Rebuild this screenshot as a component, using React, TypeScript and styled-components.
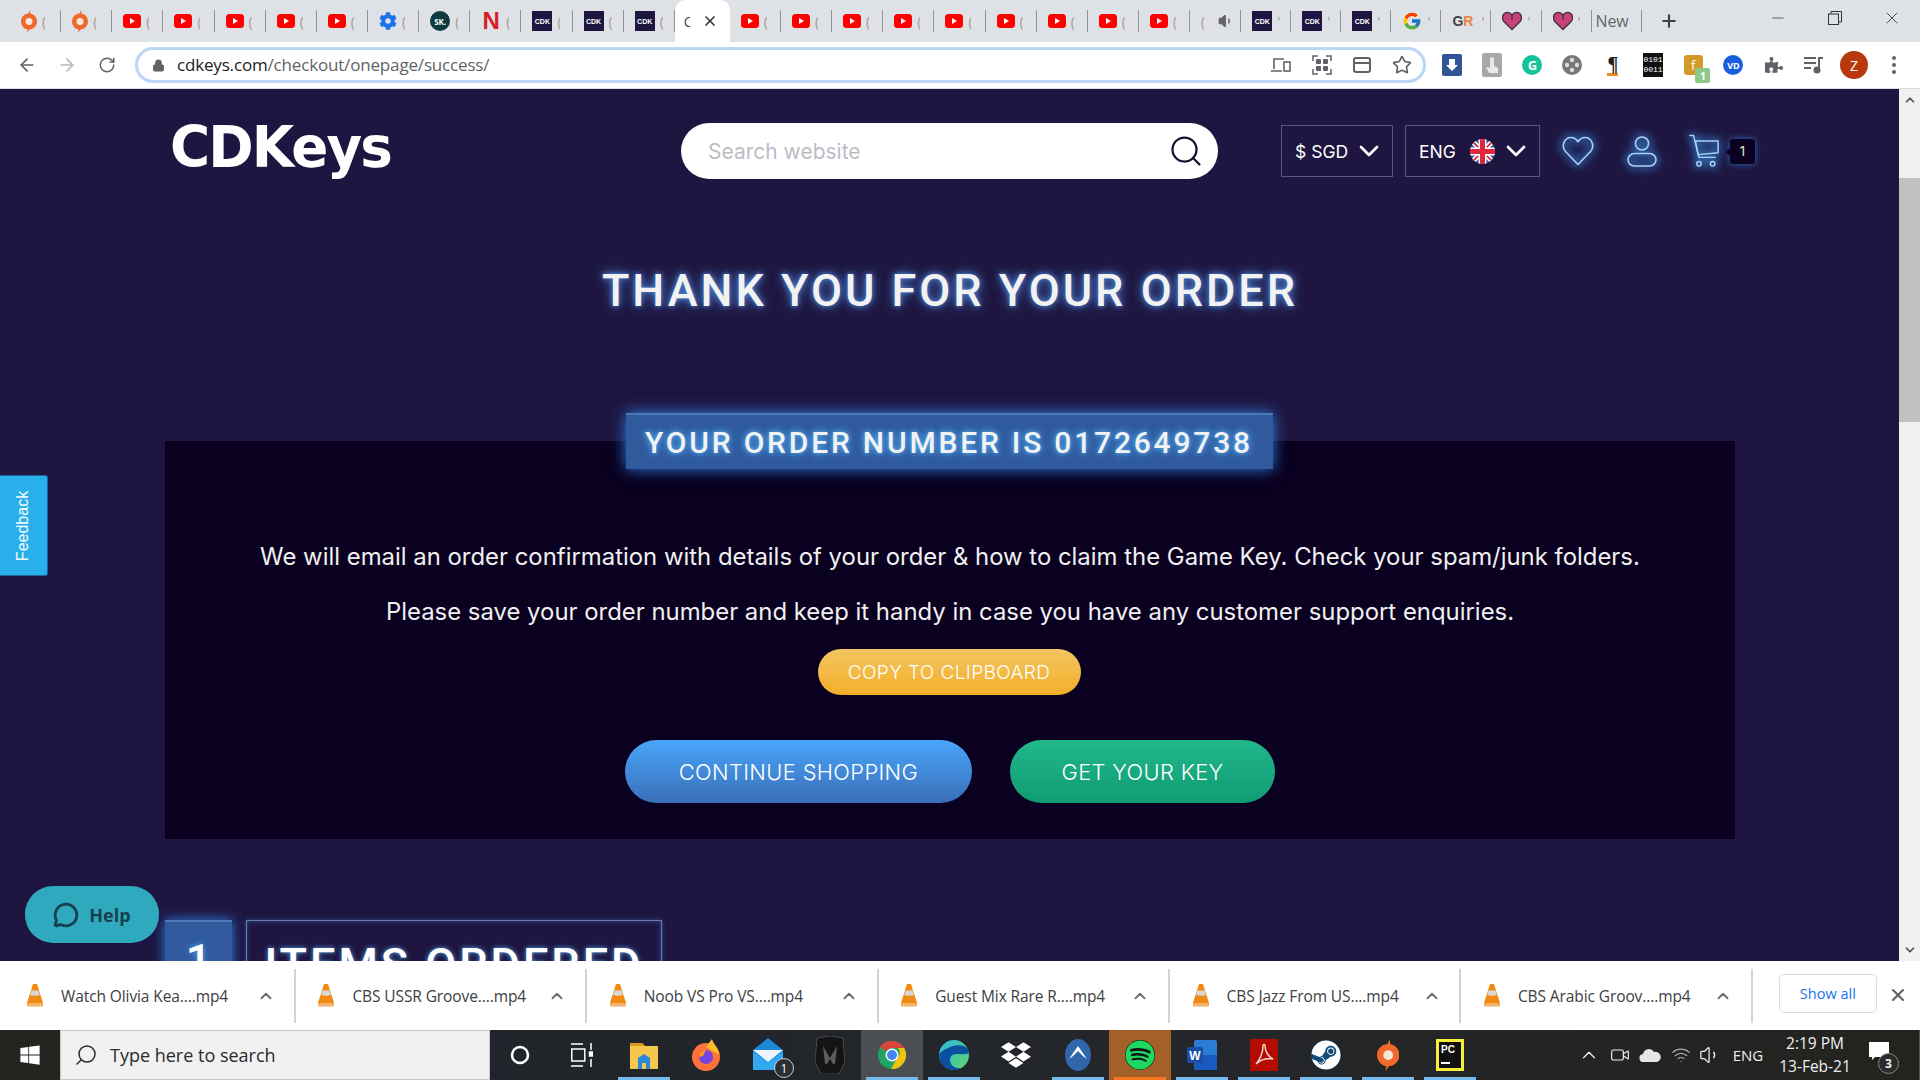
import React from 'react';
import styled, { createGlobalStyle } from 'styled-components';
import { FcGoogle } from 'react-icons/fc';
import { FaDropbox, FaSteam, FaSpotify, FaWindows, FaPuzzlePiece, FaCog } from 'react-icons/fa';
import {
    ArrowLeft, ArrowRight, RotateCw, Lock, Star, ChevronUp, ChevronDown, X, Minus, Plus, Search,
    Video, Wifi, Volume1, MessageCircle,
} from 'lucide-react';

const GlobalStyle = createGlobalStyle`
    html, body {
        margin: 0;
        height: 100%;
        overflow: hidden;
        font-family: "Open Sans", sans-serif;
    }
    * { box-sizing: border-box; }
`;

const Screen = styled.div`
    width: 1920px;
    height: 1080px;
    display: flex;
    flex-direction: column;
    position: relative;
    overflow: hidden;
`;

/* browser chrome */
const TabStrip = styled.div`
    height: 42px;
    background: #dee1e6;
    display: flex;
    padding-left: 10px;
    flex-shrink: 0;
`;

const Tab = styled.div<{ $compact?: boolean }>`
    width: ${(p) => (p.$compact ? '50.05px' : '51.15px')};
    height: 42px;
    display: flex;
    align-items: center;
    padding-left: 11px;
    gap: 5px;
    position: relative;
    font-size: 14px;
    color: #555;
    overflow: hidden;
    flex-shrink: 0;
    &::after {
        content: '';
        position: absolute;
        right: 0;
        top: 10px;
        height: 22px;
        width: 1px;
        background: #8f9398;
    }
`;

const NewLabel = styled.span`
    margin-left: -7px;
    font-size: 16px;
    letter-spacing: -0.2px;
    color: #666;
`;

const ActiveTab = styled.div`
    width: 55px;
    height: 42px;
    background: #fff;
    border-radius: 10px 10px 0 0;
    display: flex;
    align-items: center;
    justify-content: space-between;
    padding: 0 12px 0 9px;
    font-size: 14px;
    color: #444;
    flex-shrink: 0;
`;

const CutTitle = styled.span`
    width: 6px;
    overflow: hidden;
`;

const Sliver = styled.span`
    font-size: 14px;
    width: 3px;
    overflow: hidden;
    color: #a89888;
`;

const NewTabButton = styled.div`
    width: 40px;
    margin-left: 17px;
    display: flex;
    align-items: center;
    color: #3c4043;
`;

const WindowControls = styled.div`
    margin-left: auto;
    display: flex;
    align-items: flex-start;
    color: #333;
`;

const WindowButton = styled.div`
    width: 57px;
    height: 36px;
    display: flex;
    align-items: center;
    justify-content: center;
`;

const Toolbar = styled.div`
    height: 46px;
    background: #fff;
    display: flex;
    align-items: center;
    padding-left: 7px;
    flex-shrink: 0;
`;

const NavButton = styled.div<{ $muted?: boolean }>`
    width: 40px;
    height: 36px;
    display: flex;
    align-items: center;
    justify-content: center;
    color: ${(p) => (p.$muted ? '#b4b6b9' : '#5f6368')};
    flex-shrink: 0;
`;

const Omnibox = styled.div`
    width: 1291px;
    margin-left: 8px;
    margin-right: -1px;
    height: 36px;
    border: 3px solid #bcd6f7;
    border-radius: 18px;
    display: flex;
    align-items: center;
    padding-left: 14px;
    gap: 12px;
    color: #5f6368;
    flex-shrink: 0;
`;

const Url = styled.span`
    font-size: 17px;
    letter-spacing: -0.17px;
    color: #5f6368;
    margin-top: -2px;
    b {
        font-weight: 400;
        color: #202124;
    }
`;

const OmniActions = styled.div`
    margin-left: auto;
    display: flex;
    margin-right: 1px;
`;

const Extensions = styled.div`
    display: flex;
    margin-left: 7px;
`;

const Divider = styled.div`
    height: 1px;
    background: #dadce0;
    flex-shrink: 0;
`;

/* page */
const Viewport = styled.div`
    height: 872px;
    display: flex;
    flex-shrink: 0;
    overflow: hidden;
`;

const Page = styled.main`
    flex: 1;
    background: #1e1640;
    overflow: hidden;
    color: #fff;
    font-family: Inter, sans-serif;
`;

const Container = styled.div`
    width: 1570px;
    margin-left: 165px;
`;

const Header = styled.header`
    display: flex;
    align-items: center;
    height: 56px;
    margin-top: 34px;
`;

const LogoWrap = styled.div`
    width: 516px;
    flex-shrink: 0;
    padding-left: 5px;
`;

const Logo = styled.span`
    display: inline-block;
    font-family: "DejaVu Sans", sans-serif;
    font-weight: 700;
    font-size: 57px;
    line-height: 56px;
    letter-spacing: -2px;
    color: #fff;
    transform-origin: left center;
    transform: translateY(-4px) scaleX(0.96);
`;

const SearchBox = styled.div`
    width: 537px;
    height: 56px;
    background: #fff;
    border-radius: 28px;
    display: flex;
    align-items: center;
    justify-content: space-between;
    padding: 0 14px 0 27px;
    color: #bcbcc4;
    font-size: 21px;
    flex-shrink: 0;
`;

const Select = styled.div<{ $width: number }>`
    width: ${(p) => p.$width}px;
    height: 52px;
    border: 1px solid #5b5580;
    display: flex;
    align-items: center;
    justify-content: space-between;
    padding: 0 7px 0 13px;
    font-size: 17.5px;
    flex-shrink: 0;
`;

const FlagSlot = styled.span`
    display: flex;
    margin-left: 10px;
`;

const Selects = styled.div`
    display: flex;
    gap: 12px;
    margin-left: 63px;
`;

const HeaderIcons = styled.div`
    display: flex;
    align-items: center;
    margin-left: 21px;
`;

const GlowIcon = styled.div<{ $width: number }>`
    width: ${(p) => p.$width}px;
    display: flex;
    justify-content: center;
    filter: drop-shadow(0 0 4px #3d8fe6) drop-shadow(0 0 4px #3d8fe6);
`;

const CartBadge = styled.div`
    width: 25px;
    height: 25px;
    background: #0a0020;
    border-radius: 3px;
    margin-left: 11px;
    font-size: 13px;
    display: flex;
    align-items: center;
    justify-content: center;
    color: #f0e8d0;
    box-shadow: 0 0 6px #2f6fc4;
    position: relative;
    &::before {
        content: '';
        position: absolute;
        left: -4px;
        top: 9px;
        border-style: solid;
        border-width: 4px 4px 4px 0;
        border-color: transparent #0a0020 transparent transparent;
    }
`;

const Title = styled.h1`
    margin: 85px 0 0;
    text-align: center;
    font-family: Roboto, sans-serif;
    font-weight: 500;
    font-size: 45px;
    line-height: 54px;
    letter-spacing: 3px;
    color: #f2f2f2;
    text-shadow: 0 0 12px #4f86d8, 0 0 5px #4f86d8;
`;

const Card = styled.section`
    margin-top: 123px;
    height: 398px;
    background: #0a0020;
    display: flex;
    flex-direction: column;
    align-items: center;
`;

const OrderBanner = styled.div`
    margin-top: -28px;
    margin-right: 2px;
    width: 647px;
    height: 56px;
    background: #305a9d;
    border-top: 2px solid #4f78b8;
    box-shadow: 0 0 14px #2f7fe0;
    display: flex;
    align-items: center;
    justify-content: center;
    font-family: Roboto, sans-serif;
    font-weight: 500;
    font-size: 30px;
    letter-spacing: 2.8px;
    white-space: nowrap;
    color: #f2f2f2;
    text-shadow: 0 0 10px #52a8f0, 0 0 4px #52a8f0;
`;

const Message = styled.p<{ $top: number }>`
    margin: ${(p) => p.$top}px 0 0;
    font-size: 23.9px;
    line-height: 30px;
    white-space: nowrap;
    color: #f0f0f0;
    font-weight: 400;
`;

const Pill = styled.div<{ $from: string; $to: string; $width: number; $height: number; $size: number }>`
    width: ${(p) => p.$width}px;
    height: ${(p) => p.$height}px;
    border-radius: ${(p) => p.$height / 2}px;
    background: linear-gradient(${(p) => p.$from}, ${(p) => p.$to});
    display: flex;
    align-items: center;
    justify-content: center;
    font-size: ${(p) => p.$size}px;
    font-weight: 300;
    letter-spacing: 0.4px;
    color: #fff;
    white-space: nowrap;
`;

const CopyRow = styled.div`
    margin-top: 22px;
    margin-right: 2px;
`;

const ActionRow = styled.div`
    margin-top: 45px;
    display: flex;
    gap: 38px;
`;

const ItemsRow = styled.div`
    margin-top: 81px;
    display: flex;
    gap: 14px;
`;

const StepNumber = styled.div`
    width: 67px;
    height: 72px;
    background: #305a9d;
    border-top: 2px solid #4f78b8;
    box-shadow: 0 0 12px #2f7fe0;
    display: flex;
    justify-content: center;
    padding-top: 16px;
    font-family: Roboto, sans-serif;
    font-weight: 500;
    font-size: 45px;
    line-height: 46px;
    text-shadow: 0 0 6px #52a8f0;
`;

const StepTitle = styled.div`
    width: 416px;
    height: 72px;
    border: 1px solid #6f78a8;
    box-shadow: inset 0 0 5px #24508f, 0 0 4px #24508f;
    display: flex;
    justify-content: center;
    padding-top: 17px;
    font-family: Roboto, sans-serif;
    font-weight: 500;
    font-size: 45px;
    line-height: 54px;
    letter-spacing: 3px;
    text-shadow: 0 0 5px #52a8f0;
`;

const Scrollbar = styled.div`
    width: 21px;
    background: #f1f1f1;
    display: flex;
    flex-direction: column;
    align-items: center;
    color: #505050;
`;

const ScrollThumb = styled.div`
    width: 100%;
    height: 244px;
    background: #c1c1c1;
    margin-top: 67px;
`;

const ScrollArrow = styled.div<{ $end?: boolean }>`
    height: 22px;
    display: flex;
    align-items: center;
    justify-content: center;
    margin-top: ${(p) => (p.$end ? 'auto' : '0')};
`;

const Feedback = styled.div`
    position: absolute;
    left: 0;
    top: 475px;
    width: 48px;
    height: 101px;
    background: #29b0ea;
    border: 1px solid #20639a;
    border-left: 0;
    border-radius: 0 3px 3px 0;
    display: flex;
    align-items: center;
    justify-content: center;
    color: #f4fbff;
    font-family: "Liberation Sans", sans-serif;
    font-size: 16px;
    span {
        transform: rotate(-90deg);
    }
`;

const HelpButton = styled.div`
    position: absolute;
    left: 25px;
    top: 886px;
    width: 134px;
    height: 57px;
    border-radius: 28px;
    background: #2fa9bd;
    color: #15404d;
    display: flex;
    align-items: center;
    justify-content: center;
    gap: 10px;
    font-family: "Open Sans", sans-serif;
    font-weight: 700;
    font-size: 18px;
`;

/* downloads */
const DownloadBar = styled.div`
    height: 69px;
    background: #fff;
    display: flex;
    align-items: center;
    padding-left: 4.5px;
    flex-shrink: 0;
    position: relative;
`;

const DownloadItem = styled.div`
    width: 291.4px;
    height: 54px;
    border-right: 2px solid #d3d3d3;
    display: flex;
    align-items: center;
    padding-left: 21.5px;
    flex-shrink: 0;
`;

const FileName = styled.span`
    margin-left: 17px;
    width: 190px;
    font-size: 15.5px;
    letter-spacing: -0.1px;
    color: #3c4043;
    white-space: nowrap;
`;

const ChevronSlot = styled.div`
    color: #6b6f73;
    display: flex;
    margin-left: 6px;
`;

const ShowAll = styled.div`
    width: 98px;
    height: 39px;
    border: 1px solid #dadce0;
    border-radius: 5px;
    margin-left: 26px;
    margin-top: -4px;
    display: flex;
    align-items: center;
    justify-content: center;
    color: #1a73e8;
    font-size: 14.5px;
`;

const CloseDownloads = styled.div`
    margin-left: 11px;
    margin-top: -1px;
    color: #5f6368;
    display: flex;
`;

/* taskbar */
const Taskbar = styled.div`
    height: 50px;
    background: linear-gradient(90deg, #24251f, #20252b 25%, #24262a 60%, #23231f);
    display: flex;
    align-items: center;
    color: #fff;
    flex-shrink: 0;
`;

const StartButton = styled.div`
    width: 60px;
    display: flex;
    justify-content: center;
`;

const SearchField = styled.div`
    width: 430px;
    height: 50px;
    background: #f1f1f1;
    border: 1px solid #c8c8c8;
    display: flex;
    align-items: center;
    padding-left: 13px;
    gap: 12px;
    color: #2b2b2b;
    font-size: 18px;
`;

const TaskIcons = styled.div`
    display: flex;
`;

const TaskIcon = styled.div<{ $bg?: string; $line?: string; $wide?: number }>`
    width: ${(p) => p.$wide ?? 62}px;
    height: 50px;
    background: ${(p) => p.$bg ?? 'transparent'};
    display: flex;
    align-items: center;
    justify-content: center;
    position: relative;
    &::after {
        content: '';
        position: absolute;
        bottom: 0;
        left: 5px;
        right: 5px;
        height: 3px;
        background: ${(p) => p.$line ?? 'transparent'};
    }
`;

const MailCount = styled.span`
    position: absolute;
    right: 5px;
    bottom: 2px;
    width: 20px;
    height: 20px;
    border-radius: 50%;
    background: #2c3034;
    border: 1px solid #ccc;
    font-size: 12px;
    display: flex;
    align-items: center;
    justify-content: center;
`;

const Tray = styled.div`
    margin-left: auto;
    display: flex;
    align-items: center;
    font-size: 15px;
    color: #f0f0f0;
`;

const TraySlot = styled.div<{ $width: number }>`
    width: ${(p) => p.$width}px;
    display: flex;
    justify-content: center;
`;

const Clock = styled.div`
    width: 82px;
    margin-left: 2px;
    text-align: center;
    font-size: 15.5px;
    line-height: 23px;
    white-space: nowrap;
`;

const NoteSlot = styled.div`
    width: 60px;
    height: 50px;
    margin-left: 4px;
    position: relative;
    display: flex;
    align-items: center;
    padding-left: 9px;
    border-right: 1px solid #555;
    padding-bottom: 8px;
`;

const NoteCount = styled.span`
    position: absolute;
    left: 18px;
    top: 23px;
    width: 21px;
    height: 21px;
    border-radius: 50%;
    background: #2b2b2b;
    border: 1px solid #888;
    font-size: 12px;
    font-weight: 700;
    display: flex;
    align-items: center;
    justify-content: center;
`;

/* favicons */
const CdkFav = styled.div`
    width: 20px;
    height: 20px;
    background: #1e1640;
    color: #fff;
    font-family: "Liberation Sans", sans-serif;
    font-size: 7px;
    font-weight: 700;
    display: flex;
    align-items: center;
    justify-content: center;
    flex-shrink: 0;
`;

const SkFav = styled.div`
    width: 20px;
    height: 20px;
    border-radius: 50%;
    background: #0f3a40;
    color: #fff;
    font-size: 8px;
    font-weight: 700;
    display: flex;
    align-items: center;
    justify-content: center;
    flex-shrink: 0;
`;

const NetflixFav = styled.div`
    width: 20px;
    color: #d81f26;
    font-family: "Liberation Sans Narrow", "Liberation Sans", sans-serif;
    font-size: 24px;
    font-weight: 700;
    line-height: 24px;
    text-align: center;
    flex-shrink: 0;
`;

const GrFav = styled.div`
    font-family: "Liberation Sans", sans-serif;
    font-size: 14px;
    font-weight: 700;
    width: 24px;
    color: #444;
    flex-shrink: 0;
    b { color: #e8854a; }
`;

const ExtButton = styled.div`
    width: 40.2px;
    height: 36px;
    display: flex;
    align-items: center;
    justify-content: center;
    color: #5f6368;
    position: relative;
    flex-shrink: 0;
`;

const BinaryExt = styled.div`
    width: 20px;
    height: 24px;
    background: #111;
    color: #fff;
    font-family: "Liberation Mono", monospace;
    font-size: 8px;
    line-height: 10px;
    text-align: center;
    padding-top: 2px;
`;

const Avatar = styled.div`
    width: 28px;
    height: 28px;
    border-radius: 50%;
    background: #b8390e;
    color: #fff;
    font-size: 14px;
    display: flex;
    align-items: center;
    justify-content: center;
`;

const Pilcrow = styled.div`
    color: #222;
    font-family: "Liberation Serif", serif;
    font-size: 20px;
    font-weight: 700;
    line-height: 18px;
    border-bottom: 3px solid #f08a24;
`;

const YellowExt = styled.div`
    width: 19px;
    height: 20px;
    background: #d39a2a;
    color: #fff;
    border-radius: 3px;
    font-size: 13px;
    text-align: center;
    line-height: 20px;
`;

const ExtCount = styled.span`
    position: absolute;
    right: 3px;
    bottom: 0;
    width: 15px;
    height: 15px;
    background: #8bc98b;
    color: #fff;
    font-size: 11px;
    font-weight: 700;
    border-radius: 2px;
    text-align: center;
    line-height: 15px;
`;

const VdExt = styled.div`
    width: 20px;
    height: 20px;
    border-radius: 50%;
    background: #1a5de0;
    color: #fff;
    font-size: 9px;
    font-weight: 700;
    display: flex;
    align-items: center;
    justify-content: center;
`;

const GrammarlyExt = styled.div`
    width: 20px;
    height: 20px;
    border-radius: 50%;
    background: #15c39a;
    color: #fff;
    font-size: 13px;
    font-weight: 700;
    display: flex;
    align-items: center;
    justify-content: center;
`;

const YouTube = () => (
    <svg width="18" height="14" viewBox="0 0 18 14" style={{ flexShrink: 0 }}>
        <rect width="18" height="14" rx="3.5" fill="#f00" />
        <path d="M7 4l5 3-5 3z" fill="#fff" />
    </svg>
);

const Origin = ({ size = 20 }: { size?: number }) => (
    <svg width={size * 0.8} height={size * 1.15} viewBox="0 0 16 23" style={{ flexShrink: 0 }}>
        <path d="M9 0l-1.5 3.6C3.2 4 0 7.2 0 11.500c0 4 2.800 7.300 6.600 8L6 23l2.500-3.500c4.300-.3 7.500-3.700 7.500-8 0-3.900-2.800-7.200-6.500-7.900z" fill="#f0692c" />
        <circle cx="8" cy="11.500" r="3.500" fill="#f6e6da" />
    </svg>
);

const LoveHeart = () => (
    <svg width="20" height="20" viewBox="0 0 22 21" style={{ flexShrink: 0 }}>
        <path d="M11 20L2 11C-1 7 1 1 6 1c2.500 0 4 1.500 5 3 1-1.500 2.500-3 5-3 5 0 7 6 4 10z" fill="#c8407c" stroke="#43303c" strokeWidth="1.500" />
        <path d="M11 4v5" stroke="#43303c" strokeWidth="1.500" />
    </svg>
);

const Gear = () => <FaCog size={18} color="#1a73e8" style={{ flexShrink: 0 }} />;

const Vlc = () => (
    <svg width="18" height="25" viewBox="0 0 18 25">
        <path d="M7 1h4l6 19c.4 2-1 3-2 3H3c-1 0-2.400-1-2-3z" fill="#f08a12" />
        <path d="M5.500 7.500h7l1.300 4.500c-2.500 1-7.100 1-9.600 0z" fill="#d8d8d8" />
        <path d="M1.500 20h15l.5 3.500H1z" fill="#f6b26b" />
    </svg>
);

const Chrome = () => (
    <svg width="28" height="28" viewBox="0 0 28 28">
        <circle cx="14" cy="14" r="14" fill="#1fa463" />
        <path d="M14 0a14 14 0 0 1 12.100 7H14a7 7 0 0 0-6.100 3.500L2.100 5.800A14 14 0 0 1 14 0z" fill="#db4437" />
        <path d="M26.100 7A14 14 0 0 1 13 28l5.900-10.500A7 7 0 0 0 20 7z" fill="#f4c20d" />
        <circle cx="14" cy="14" r="6.500" fill="#fff" />
        <circle cx="14" cy="14" r="5" fill="#4285f4" />
    </svg>
);

const Edge = () => (
    <svg width="30" height="30" viewBox="0 0 30 30">
        <defs>
            <linearGradient id="edgeTop" x1="0" y1="0" x2="1" y2="1">
                <stop offset="0" stopColor="#2fb8e0" />
                <stop offset="1" stopColor="#5fd66a" />
            </linearGradient>
        </defs>
        <circle cx="15" cy="15" r="15" fill="url(#edgeTop)" />
        <path d="M0 15c0 9 7 15 15 15 3 0 5-.5 7-2-6 1-11-3-11-8 0-4 3-6 7-6 4 0 12 1 12-2 0-1-1-3-2-4-6-4-13-3-19 0C4 10 1 12 0 15z" fill="#0b4fa0" />
    </svg>
);

const Firefox = () => (
    <svg width="28" height="32" viewBox="0 0 28 32">
        <circle cx="14" cy="18" r="14" fill="#ff7139" />
        <path d="M20 0c1 5 7 8 7 16L14 8z" fill="#ffbd2e" />
        <circle cx="14" cy="18" r="7" fill="#7542e5" />
        <path d="M7 18a7 7 0 0 1 7-7l-3 6z" fill="#ff980e" />
    </svg>
);

const Mail = () => (
    <svg width="30" height="34" viewBox="0 0 30 34">
        <path d="M0 12L15 0l15 12v20H0z" fill="#1e88d8" />
        <path d="M0 12h30L15 24z" fill="#eaf5fd" />
        <path d="M0 14l15 10 15-10v18H0z" fill="#32a8ee" />
    </svg>
);

const Predator = () => (
    <svg width="30" height="38" viewBox="0 0 30 38">
        <path d="M2 2l13-2 13 2 2 24-6 12H6L0 26z" fill="#141414" stroke="#4a4a4a" />
        <path d="M8 10l7 12 7-12-2 18h-2l-3-5-3 5h-2z" fill="#5c5c5c" />
    </svg>
);

const Nord = () => (
    <svg width="26" height="32" viewBox="0 0 26 32">
        <ellipse cx="13" cy="16" rx="13" ry="16" fill="#2f66ac" />
        <path d="M4 20l9-13 9 13-4-3-5-5-5 5z" fill="#fff" />
    </svg>
);

const Word = () => (
    <svg width="30" height="30" viewBox="0 0 30 30">
        <rect x="7" y="0" width="23" height="30" rx="2" fill="#2b7cd3" />
        <rect x="7" y="15" width="23" height="15" fill="#185abd" />
        <rect x="0" y="7" width="16" height="16" rx="2" fill="#1a4fa8" />
        <text x="8" y="19.500" fontSize="12" fontWeight="700" fill="#fff" textAnchor="middle" fontFamily="Liberation Sans">W</text>
    </svg>
);

const Acrobat = () => (
    <svg width="28" height="32" viewBox="0 0 28 32">
        <rect width="28" height="32" fill="#b30b00" />
        <path d="M6 25c4-4 7-12 7-18 0-2 2-2 2 0 0 6 4 11 8 13-6-1-12 0-17 5z" fill="none" stroke="#f4d6d0" strokeWidth="1.500" />
    </svg>
);

const PyCharm = () => (
    <svg width="28" height="32" viewBox="0 0 28 32">
        <rect width="28" height="32" fill="#f5ee3a" />
        <rect x="3" y="3" width="22" height="26" fill="#111" />
        <text x="5" y="14" fontSize="10" fontWeight="700" fill="#fff" fontFamily="Liberation Sans">PC</text>
        <rect x="5" y="23" width="9" height="2" fill="#fff" />
    </svg>
);

const Flag = () => (
    <svg width="25" height="25" viewBox="0 0 25 25" style={{ borderRadius: '50%' }}>
        <rect width="25" height="25" fill="#2a5ca8" />
        <path d="M0 0l25 25M25 0L0 25" stroke="#fff" strokeWidth="5" />
        <path d="M0 0l25 25M25 0L0 25" stroke="#e0263c" strokeWidth="1.800" />
        <path d="M12.500 0v25M0 12.500h25" stroke="#fff" strokeWidth="8" />
        <path d="M12.500 0v25M0 12.500h25" stroke="#e0263c" strokeWidth="5" />
    </svg>
);

const GlowHeart = () => (
    <svg width="32" height="30" viewBox="0 0 32 30" fill="none" stroke="#a8d3f7" strokeWidth="1.6" strokeLinejoin="round">
        <path d="M16 28.500L3.500 15.500C-1 10.500 2 1.500 9 1.500c3.500 0 5.600 2 7 4.200 1.400-2.200 3.500-4.200 7-4.200 7 0 10 9 5.500 14z" />
    </svg>
);

const GlowPerson = () => (
    <svg width="30" height="31" viewBox="0 0 30 31" fill="none" stroke="#a8d3f7" strokeWidth="1.6">
        <circle cx="15" cy="7.500" r="6.500" />
        <rect x="1" y="17.500" width="28" height="12.500" rx="6.250" />
    </svg>
);

const GlowCart = () => (
    <svg width="33" height="36" viewBox="0 0 33 36" fill="none" stroke="#a8d3f7" strokeWidth="1.6" strokeLinejoin="round" strokeLinecap="round">
        <path d="M1 1h4l6 24h18" />
        <path d="M7 7h25v13l-22 2z" />
        <circle cx="11" cy="32" r="2.500" />
        <circle cx="26" cy="32" r="2.500" />
    </svg>
);

const ChevronWhite = () => <ChevronDown size={32} strokeWidth={2} color="#fff" />;

const tabs: React.ReactNode[] = [
    <Origin />, <Origin />, <YouTube />, <YouTube />, <YouTube />, <YouTube />, <YouTube />, <Gear />,
    <SkFav>SK.</SkFav>, <NetflixFav>N</NetflixFav>, <CdkFav>CDK</CdkFav>, <CdkFav>CDK</CdkFav>, <CdkFav>CDK</CdkFav>,
];

const tabsAfter: React.ReactNode[] = [
    <YouTube />, <YouTube />, <YouTube />, <YouTube />, <YouTube />, <YouTube />, <YouTube />, <YouTube />, <YouTube />,
];

const tabsEnd: React.ReactNode[] = [
    <CdkFav>CDK</CdkFav>, <CdkFav>CDK</CdkFav>, <CdkFav>CDK</CdkFav>, <FcGoogle size={20} style={{ flexShrink: 0 }} />,
    <GrFav>G<b>R</b></GrFav>, <LoveHeart />, <LoveHeart />,
];

const downloads = [
    'Watch Olivia Kea....mp4',
    'CBS USSR Groove....mp4',
    'Noob VS Pro VS....mp4',
    'Guest Mix Rare R....mp4',
    'CBS Jazz From US....mp4',
    'CBS Arabic Groov....mp4',
];

const App = () => (
    <Screen>
        <GlobalStyle />
        <TabStrip>
            {tabs.map((icon, i) => (
                <Tab key={i}>{icon}<Sliver>(</Sliver></Tab>
            ))}
            <ActiveTab>
                <CutTitle>C</CutTitle>
                <X size={16} strokeWidth={2.5} color="#333" />
            </ActiveTab>
            {tabsAfter.map((icon, i) => (
                <Tab key={i}>{icon}<Sliver>(</Sliver></Tab>
            ))}
            <Tab>
                <Sliver>(</Sliver>
                <Volume1 size={16} color="#666" fill="#666" style={{ flexShrink: 0, marginLeft: 9 }} />
            </Tab>
            {tabsEnd.map((icon, i) => (
                <Tab key={i} $compact>{icon}<Sliver>'</Sliver></Tab>
            ))}
            <Tab $compact><NewLabel>New</NewLabel></Tab>
            <NewTabButton><Plus size={20} strokeWidth={2.5} /></NewTabButton>
            <WindowControls>
                <WindowButton><Minus size={18} strokeWidth={1} /></WindowButton>
                <WindowButton>
                    <svg width="14" height="14" viewBox="0 0 14 14" fill="none" stroke="#333">
                        <rect x="0.500" y="3" width="10" height="10.500" />
                        <path d="M3 3V.500h10.500V11H10.500" />
                    </svg>
                </WindowButton>
                <WindowButton><X size={20} strokeWidth={1} /></WindowButton>
            </WindowControls>
        </TabStrip>
        <Toolbar>
            <NavButton><ArrowLeft size={20} /></NavButton>
            <NavButton $muted><ArrowRight size={20} /></NavButton>
            <NavButton><RotateCw size={18} /></NavButton>
            <Omnibox>
                <Lock size={13} fill="#5f6368" />
                <Url><b>cdkeys.com</b>/checkout/onepage/success/</Url>
                <OmniActions>
                    <ExtButton>
                        <svg width="20" height="16" viewBox="0 0 20 16" fill="none" stroke="#5f6368" strokeWidth="1.600">
                            <path d="M13 2H3v10M0 14h11" />
                            <rect x="13" y="5" width="6" height="9" />
                        </svg>
                    </ExtButton>
                    <ExtButton>
                        <svg width="20" height="20" viewBox="0 0 20 20" fill="#5f6368">
                            <rect x="4" y="4" width="5" height="5" rx="1" />
                            <rect x="11" y="4" width="5" height="5" rx="1" />
                            <rect x="4" y="11" width="5" height="5" rx="1" />
                            <rect x="11" y="11" width="5" height="5" rx="1" />
                            <path d="M1 6V1h5M14 1h5v5M19 14v5h-5M6 19H1v-5" fill="none" stroke="#5f6368" strokeWidth="1.500" />
                        </svg>
                    </ExtButton>
                    <ExtButton>
                        <svg width="18" height="16" viewBox="0 0 18 16" fill="none" stroke="#5f6368" strokeWidth="2">
                            <rect x="1" y="1" width="16" height="14" rx="2" />
                            <path d="M1 6h16" />
                        </svg>
                    </ExtButton>
                    <ExtButton><Star size={20} color="#5f6368" /></ExtButton>
                </OmniActions>
            </Omnibox>
            <Extensions>
                <ExtButton>
                    <svg width="20" height="22" viewBox="0 0 20 22">
                        <rect width="20" height="22" rx="2" fill="#2f5597" />
                        <path d="M7 5h6v6h3l-6 6-6-6h3z" fill="#fff" />
                    </svg>
                </ExtButton>
                <ExtButton>
                    <svg width="20" height="24" viewBox="0 0 20 24">
                        <rect width="20" height="24" rx="2" fill="#a8a8a8" />
                        <path d="M8 6a2 2 0 0 1 4 0v7l4 2v5H7l-3-6 4 1z" fill="#e8e8e8" />
                    </svg>
                </ExtButton>
                <ExtButton><GrammarlyExt>G</GrammarlyExt></ExtButton>
                <ExtButton>
                    <svg width="22" height="24" viewBox="0 0 22 24">
                        <circle cx="10" cy="12" r="10" fill="#777" />
                        <circle cx="10" cy="7" r="2.200" fill="#ddd" />
                        <circle cx="5" cy="12" r="2.200" fill="#ddd" />
                        <circle cx="15" cy="12" r="2.200" fill="#ddd" />
                        <circle cx="10" cy="17" r="2.200" fill="#ddd" />
                    </svg>
                </ExtButton>
                <ExtButton><Pilcrow>¶</Pilcrow></ExtButton>
                <ExtButton><BinaryExt>0101<br />0011</BinaryExt></ExtButton>
                <ExtButton><YellowExt>f</YellowExt><ExtCount>1</ExtCount></ExtButton>
                <ExtButton><VdExt>VD</VdExt></ExtButton>
                <ExtButton><FaPuzzlePiece size={18} color="#5f6368" /></ExtButton>
                <ExtButton>
                    <svg width="20" height="18" viewBox="0 0 20 18" fill="none" stroke="#5f6368" strokeWidth="2">
                        <path d="M0 2h12M0 7h12M0 12h7M15 14V2h4" />
                        <circle cx="13" cy="14" r="2.500" fill="#5f6368" />
                    </svg>
                </ExtButton>
                <ExtButton><Avatar>Z</Avatar></ExtButton>
                <ExtButton>
                    <svg width="4" height="18" viewBox="0 0 4 18" fill="#5f6368">
                        <circle cx="2" cy="2" r="2" />
                        <circle cx="2" cy="9" r="2" />
                        <circle cx="2" cy="16" r="2" />
                    </svg>
                </ExtButton>
            </Extensions>
        </Toolbar>
        <Divider />
        <Viewport>
            <Page>
                <Container>
                    <Header>
                        <LogoWrap><Logo>CDKeys</Logo></LogoWrap>
                        <SearchBox>
                            Search website
                            <Search size={36} strokeWidth={1.5} color="#141030" />
                        </SearchBox>
                        <Selects>
                            <Select $width={112}>$ SGD <ChevronWhite /></Select>
                            <Select $width={135}>ENG <FlagSlot><Flag /></FlagSlot> <ChevronWhite /></Select>
                        </Selects>
                        <HeaderIcons>
                            <GlowIcon $width={34}><GlowHeart /></GlowIcon>
                            <GlowIcon $width={94}><GlowPerson /></GlowIcon>
                            <GlowIcon $width={30}><GlowCart /></GlowIcon>
                            <CartBadge>1</CartBadge>
                        </HeaderIcons>
                    </Header>
                    <Title>THANK YOU FOR YOUR ORDER</Title>
                    <Card>
                        <OrderBanner>YOUR ORDER NUMBER IS 0172649738</OrderBanner>
                        <Message $top={73}>We will email an order confirmation with details of your order &amp; how to claim the Game Key. Check your spam/junk folders.</Message>
                        <Message $top={25}>Please save your order number and keep it handy in case you have any customer support enquiries.</Message>
                        <CopyRow>
                            <Pill $from="#f2c562" $to="#f3ae28" $width={263} $height={46} $size={19}>COPY TO CLIPBOARD</Pill>
                        </CopyRow>
                        <ActionRow>
                            <Pill $from="#48a6fa" $to="#3b6eb8" $width={347} $height={63} $size={21.8}>CONTINUE SHOPPING</Pill>
                            <Pill $from="#22b78c" $to="#109c72" $width={265} $height={63} $size={21.8}>GET YOUR KEY</Pill>
                        </ActionRow>
                    </Card>
                    <ItemsRow>
                        <StepNumber>1</StepNumber>
                        <StepTitle>ITEMS ORDERED</StepTitle>
                    </ItemsRow>
                </Container>
            </Page>
            <Scrollbar>
                <ScrollArrow><ChevronUp size={14} strokeWidth={3} /></ScrollArrow>
                <ScrollThumb />
                <ScrollArrow $end><ChevronDown size={14} strokeWidth={3} /></ScrollArrow>
            </Scrollbar>
        </Viewport>
        <Feedback><span>Feedback</span></Feedback>
        <HelpButton><MessageCircle size={26} strokeWidth={2.6} />Help</HelpButton>
        <DownloadBar>
            {downloads.map((name) => (
                <DownloadItem key={name}>
                    <Vlc />
                    <FileName>{name}</FileName>
                    <ChevronSlot><ChevronUp size={18} strokeWidth={2.5} /></ChevronSlot>
                </DownloadItem>
            ))}
            <ShowAll>Show all</ShowAll>
            <CloseDownloads><X size={20} strokeWidth={2.5} /></CloseDownloads>
        </DownloadBar>
        <Taskbar>
            <StartButton><FaWindows size={22} /></StartButton>
            <SearchField>
                <Search size={24} strokeWidth={1.5} style={{ transform: 'scaleX(-1)' }} />
                Type here to search
            </SearchField>
            <TaskIcons>
                <TaskIcon $wide={60}>
                    <svg width="20" height="20" viewBox="0 0 20 20" fill="none" stroke="#fff" strokeWidth="2.500"><circle cx="10" cy="10" r="8" /></svg>
                </TaskIcon>
                <TaskIcon $wide={63}>
                    <svg width="22" height="24" viewBox="0 0 22 24" fill="none" stroke="#fff" strokeWidth="1.500">
                        <path d="M0 1h12M0 23h12" />
                        <rect x=".8" y="6" width="13" height="12" />
                        <path d="M20 0v7M20 16v8" />
                        <rect x="18.500" y="9" width="3" height="4" fill="#fff" />
                    </svg>
                </TaskIcon>
                <TaskIcon $line="#76b9ed">
                    <svg width="28" height="28" viewBox="0 0 28 28">
                        <path d="M0 2h12l3 3h13v23H0z" fill="#f6c74e" />
                        <path d="M0 2h12l3 3H0z" fill="#e09a20" />
                        <path d="M8 28V17l6-4 6 4v11h-4v-6h-4v6z" fill="#2b88d8" />
                    </svg>
                </TaskIcon>
                <TaskIcon><Firefox /></TaskIcon>
                <TaskIcon><Mail /><MailCount>1</MailCount></TaskIcon>
                <TaskIcon><Predator /></TaskIcon>
                <TaskIcon $bg="#4b4e52" $line="#76b9ed"><Chrome /></TaskIcon>
                <TaskIcon $line="#76b9ed"><Edge /></TaskIcon>
                <TaskIcon><FaDropbox size={30} color="#fff" /></TaskIcon>
                <TaskIcon $line="#76b9ed"><Nord /></TaskIcon>
                <TaskIcon $bg="#a5602a" $line="#f4761c"><FaSpotify size={30} color="#1ed760" style={{ background: '#111', borderRadius: '50%' }} /></TaskIcon>
                <TaskIcon $line="#76b9ed"><Word /></TaskIcon>
                <TaskIcon $line="#76b9ed"><Acrobat /></TaskIcon>
                <TaskIcon $line="#76b9ed"><FaSteam size={30} color="#fff" style={{ background: '#134a7c', borderRadius: '50%' }} /></TaskIcon>
                <TaskIcon $line="#76b9ed"><Origin size={28} /></TaskIcon>
                <TaskIcon $line="#76b9ed"><PyCharm /></TaskIcon>
            </TaskIcons>
            <Tray>
                <TraySlot $width={32}><ChevronUp size={22} strokeWidth={1.4} /></TraySlot>
                <TraySlot $width={30}><Video size={20} strokeWidth={1.4} /></TraySlot>
                <TraySlot $width={30}>
                    <svg width="22" height="14" viewBox="0 0 22 14"><path d="M5 14a4 4 0 0 1-1-8 6 6 0 0 1 11-2 5 5 0 0 1 3 10z" fill="#e6e6e6" /></svg>
                </TraySlot>
                <TraySlot $width={31}><Wifi size={20} strokeWidth={1.4} color="#aaa" /></TraySlot>
                <TraySlot $width={28}><Volume1 size={22} strokeWidth={1.4} /></TraySlot>
                <TraySlot $width={48}>ENG</TraySlot>
                <Clock>2:19 PM<br />13-Feb-21</Clock>
                <NoteSlot>
                    <svg width="20" height="18" viewBox="0 0 20 18"><path d="M0 0h20v15H6l-3 3v-3H0z" fill="#fff" /></svg>
                    <NoteCount>3</NoteCount>
                </NoteSlot>
            </Tray>
        </Taskbar>
    </Screen>
);

export default App;
